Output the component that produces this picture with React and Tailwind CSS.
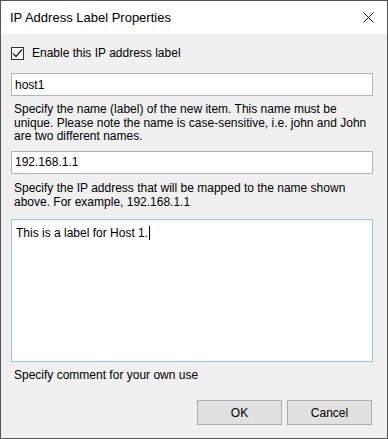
import { useState } from "react";

function CloseIcon() {
    return (
        <svg width="11" height="11" viewBox="0 0 11 11" className="block">
            <path d="M0.5 0.5 L10.5 10.5 M10.5 0.5 L0.5 10.5" stroke="#111" strokeWidth="1" fill="none" />
        </svg>
    );
}

function Checkbox({ checked, onChange }) {
    return (
        <button
            onClick={() => onChange(!checked)}
            className="w-[13px] h-[13px] border border-[#333] bg-white flex items-center justify-center shrink-0"
        >
            {checked && (
                <svg width="11" height="11" viewBox="0 0 11 11" className="block">
                    <path d="M1 5.5 L4 8.5 L10 1.5" stroke="#222" strokeWidth="1.2" fill="none" />
                </svg>
            )}
        </button>
    );
}

export default function App() {
    const [enabled, setEnabled] = useState(true);

    return (
        <div className="w-[388px] h-[439px] flex flex-col border border-[#555] bg-[#f0f0f0] text-black text-[12px] font-['Liberation_Sans',Arial,sans-serif]">
            <div className="h-[33px] shrink-0 bg-white flex items-center justify-between pl-[9px] pr-[13px]">
                <span className="text-[13px] text-black">IP Address Label Properties</span>
                <CloseIcon />
            </div>

            <div className="flex-1 flex flex-col pl-[10px] pr-[14px]">
                <label className="flex items-center gap-[8px] mt-[13px] h-[13px]">
                    <Checkbox checked={enabled} onChange={setEnabled} />
                    <span className="leading-[13px]">Enable this IP address label</span>
                </label>

                <div className="mt-[13px] h-[23px] border border-[#b4b4b4] bg-white flex items-center px-[3px] leading-none">
                    host1
                </div>
                <p className="mt-[7px] pl-[3px] leading-[13.5px]">
                    Specify the name (label) of the new item. This name must be unique. Please note the name is case-sensitive, i.e. john and John are two different names.
                </p>

                <div className="mt-[7px] h-[23px] border border-[#b4b4b4] bg-white flex items-center px-[3px] leading-none">
                    192.168.1.1
                </div>
                <p className="mt-[7px] pl-[3px] leading-[14.5px]">
                    Specify the IP address that will be mapped to the name shown above. For example, 192.168.1.1
                </p>

                <div className="mt-[9px] h-[143px] border border-[#99c4ee] bg-white px-[4px] pt-[6px] leading-[14px]">
                    This is a label for Host 1.<span className="inline-block w-px h-[14px] bg-black align-top ml-px"></span>
                </div>
                <p className="mt-[6px] pl-[3px] leading-[14px]">Specify comment for your own use</p>

                <div className="mt-auto mb-[13px] mr-px flex justify-end gap-[5px]">
                    <button className="w-[85px] h-[25px] border border-[#adadad] bg-[#e1e1e1] text-[12px]">OK</button>
                    <button className="w-[85px] h-[25px] border border-[#adadad] bg-[#e1e1e1] text-[12px]">Cancel</button>
                </div>
            </div>
        </div>
    );
}
